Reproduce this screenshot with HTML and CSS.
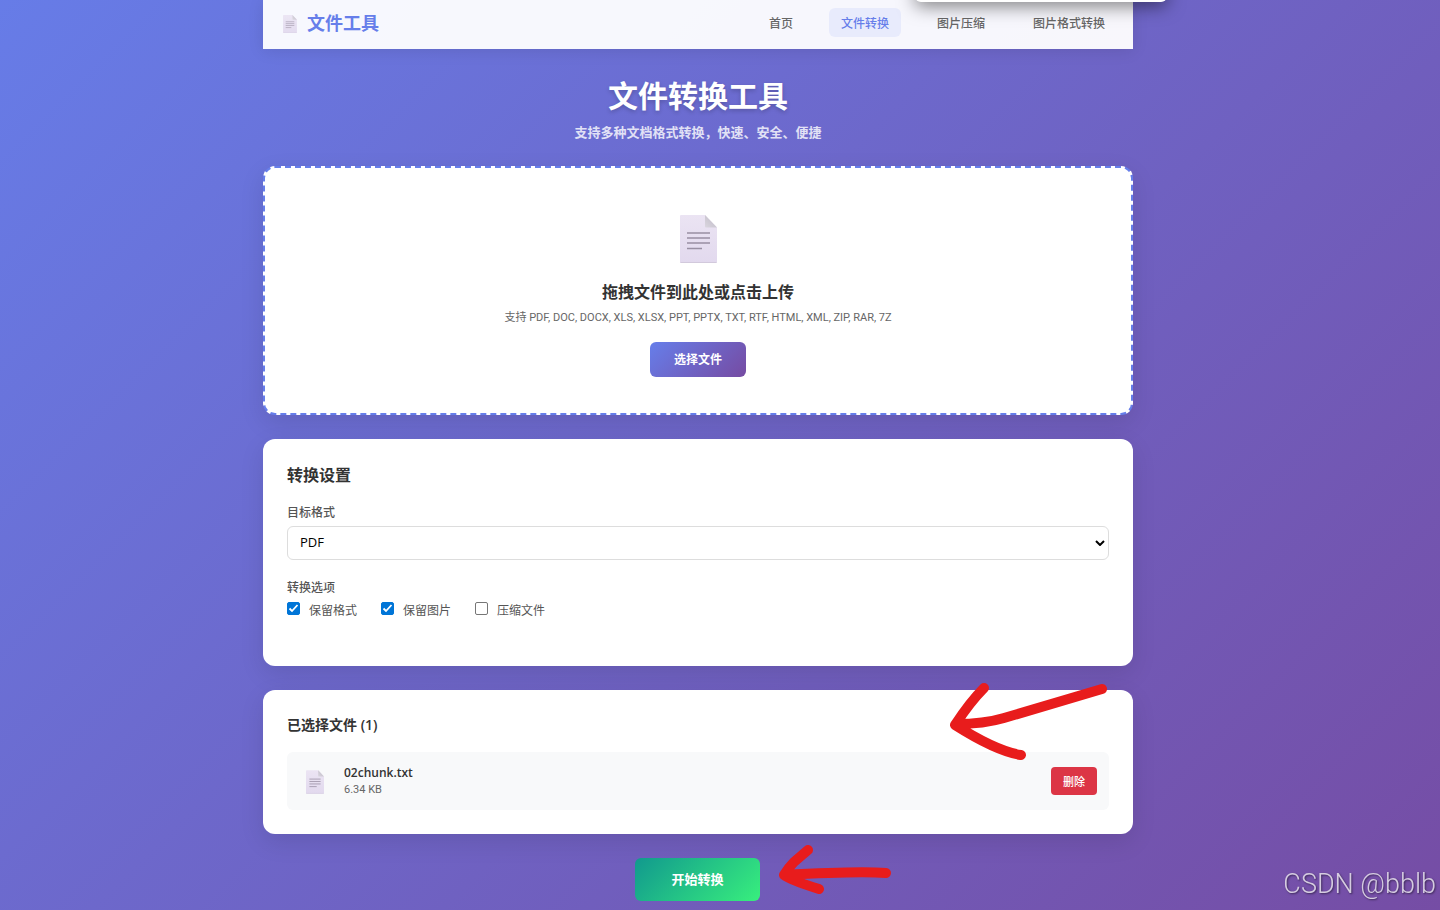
FILE: index.html
```html
<!DOCTYPE html>
<html lang="zh-CN">
<head>
<meta charset="utf-8">
<meta name="viewport" content="width=device-width, initial-scale=1">
<title>文件转换工具</title>
<link rel="stylesheet" href="styles.css">
</head>
<body>
<svg class="defs" aria-hidden="true">
  <defs>
    <linearGradient id="paper" x1="0" y1="0" x2="0" y2="1"><stop offset="0" stop-color="#ebe4f3"/><stop offset="1" stop-color="#e2d9ee"/></linearGradient>
    <linearGradient id="fold" x1="0" y1="1" x2="1" y2="0"><stop offset="0" stop-color="#dad6df"/><stop offset="1" stop-color="#bdb8c4"/></linearGradient>
    <symbol id="doc" viewBox="0 0 37 48">
      <path d="M1 0H25L37 12.500V47a1 1 0 0 1-1 1H1a1 1 0 0 1-1-1V1a1 1 0 0 1 1-1z" fill="url(#paper)"/>
      <path d="M.5 47.500H36.500" stroke="#d2c9dc" stroke-width="1"/>
      <path d="M25 0L37 12.500H26a1 1 0 0 1-1-1z" fill="url(#fold)"/>
      <path d="M7 18H30M7 23H30M7 28H30M7 33.500H22" stroke="#998fa3" stroke-width="1.600"/>
    </symbol>
  </defs>
</svg>
<div class="page">
  <header class="navbar">
    <a class="brand" href="#"><svg class="brand-icon" aria-hidden="true"><use href="#doc"/></svg>文件工具</a>
    <nav class="nav">
      <a class="nav-link" href="#">首页</a>
      <a class="nav-link active" href="#">文件转换</a>
      <a class="nav-link" href="#">图片压缩</a>
      <a class="nav-link" href="#">图片格式转换</a>
    </nav>
    <div class="popover"></div>
  </header>
  <main class="main">
    <div class="hero">
      <h1 class="title">文件转换工具</h1>
      <p class="subtitle">支持多种文档格式转换，快速、安全、便捷</p>
    </div>
    <section class="dropzone">
      <svg class="drop-icon" aria-hidden="true"><use href="#doc"/></svg>
      <h2 class="drop-title">拖拽文件到此处或点击上传</h2>
      <p class="formats">支持 PDF, DOC, DOCX, XLS, XLSX, PPT, PPTX, TXT, RTF, HTML, XML, ZIP, RAR, 7Z</p>
      <button class="choose" type="button">选择文件</button>
    </section>
    <section class="card settings">
      <h2 class="card-title">转换设置</h2>
      <label class="label" for="format">目标格式</label>
      <div class="select-wrap">
        <select class="select" id="format"><option>PDF</option></select>
        <svg class="chevron" viewBox="0 0 10 6" aria-hidden="true"><path d="M1 1L5 5L9 1" fill="none" stroke="#000" stroke-width="2"/></svg>
      </div>
      <fieldset class="options">
        <legend class="label">转换选项</legend>
        <div class="option-row">
          <label class="option"><input class="check" type="checkbox" checked>保留格式</label>
          <label class="option"><input class="check" type="checkbox" checked>保留图片</label>
          <label class="option"><input class="check" type="checkbox">压缩文件</label>
        </div>
      </fieldset>
    </section>
    <section class="card files">
      <h2 class="files-title">已选择文件 (1)</h2>
      <div class="file">
        <svg class="file-icon" aria-hidden="true"><use href="#doc"/></svg>
        <div class="file-info">
          <div class="file-name">02chunk.txt</div>
          <div class="file-size">6.34 KB</div>
        </div>
        <button class="delete" type="button">删除</button>
      </div>
      <svg class="arrow arrow-files" viewBox="0 0 160 80" aria-hidden="true">
        <path d="M154 7Q110 20 56 36Q36 42 8 42M36 6Q22 20 7 43M7 43Q48 69 73 73"/>
      </svg>
    </section>
    <div class="actions">
      <button class="start" type="button">开始转换</button>
      <svg class="arrow arrow-start" viewBox="0 0 114 54" aria-hidden="true">
        <path d="M108 29Q80 27 6 31M30 6L16 18Q10 24 6 31M6 31Q12 36 41 45"/>
      </svg>
    </div>
  </main>
</div>
<div class="watermark">CSDN @bblb</div>
</body>
</html>
```

FILE: styles.css
```css
* { box-sizing: border-box; }
body {
  margin: 0;
  min-height: 100vh;
  padding-right: 44px;
  overflow: hidden;
  font-family: "Open Sans", "Noto Sans CJK SC", sans-serif;
  font-size: 12px;
  color: #333;
  background: linear-gradient(135deg, #667eea -4%, #764ba2 104%);
}
h1, h2, p { margin: 0; }
button, select { font-family: inherit; }
button { border: 0; color: #fff; cursor: pointer; }
.defs { position: absolute; width: 0; height: 0; }
.page { max-width: 870px; margin: 0 auto; }

.navbar {
  position: relative;
  display: flex;
  align-items: center;
  justify-content: space-between;
  padding: 8px 16px 12px;
  background: rgba(255, 255, 255, .95);
  box-shadow: 0 2px 16px rgba(0, 0, 0, .1);
}
.brand {
  display: flex;
  align-items: center;
  gap: 10px;
  padding: 2px 0 0 4px;
  font-size: 18px;
  line-height: 27px;
  font-weight: 700;
  color: #667eea;
  text-decoration: none;
}
.brand-icon { width: 14px; height: 18px; opacity: .9; }
.nav { display: flex; gap: 24px; }
.nav-link {
  padding: 7px 12px 5px;
  border-radius: 6px;
  line-height: 17px;
  font-weight: 500;
  color: #666;
  text-decoration: none;
}
.nav-link.active { color: #667eea; background: #e8ebfc; }
.popover {
  position: absolute;
  top: -18px;
  right: -34px;
  width: 252px;
  height: 20px;
  border-radius: 6px;
  background: #fff;
  box-shadow: 0 4px 18px rgba(0, 0, 0, .5);
}

.hero { padding: 23px 0; text-align: center; color: #fff; }
.title {
  font-size: 30px;
  line-height: 48px;
  font-weight: 700;
  text-shadow: 0 2px 4px rgba(0, 0, 0, .2);
}
.subtitle { margin-top: 2px; font-size: 13px; line-height: 21px; font-weight: 600; opacity: .8; }

.dropzone {
  display: flex;
  flex-direction: column;
  align-items: center;
  padding: 47px 24px 36px;
  border: 2px dashed #667eea;
  border-radius: 12px;
  background: #fff;
  box-shadow: 0 8px 24px rgba(0, 0, 0, .1);
}
.drop-icon { width: 37px; height: 48px; }
.drop-title { margin-top: 16px; font-size: 16px; line-height: 26px; font-weight: 600; }
.formats {
  margin-top: 4px;
  font-family: Roboto, "Noto Sans CJK SC", sans-serif;
  font-size: 11px;
  line-height: 17px;
  color: #666;
}
.choose {
  margin-top: 16px;
  padding: 9px 24px;
  border-radius: 6px;
  font-size: 12px;
  line-height: 17px;
  font-weight: 700;
  background: linear-gradient(135deg, #667eea, #764ba2);
}

.card {
  position: relative;
  margin-top: 24px;
  padding: 24px;
  border-radius: 12px;
  background: #fff;
  box-shadow: 0 8px 24px rgba(0, 0, 0, .1);
}
.settings { padding-bottom: 46px; }
.card-title { margin-bottom: 16px; font-size: 16px; line-height: 24px; font-weight: 600; }
.label { display: block; padding: 0; line-height: 19px; font-weight: 500; color: #555; }
.select-wrap { position: relative; margin: 4px 0 18px; }
.select {
  display: block;
  width: 100%;
  height: 34px;
  padding: 0 12px 2px;
  appearance: none;
  border: 1px solid #ddd;
  border-radius: 6px;
  background: #fff;
  color: #000;
  font-size: 13px;
}
.chevron { position: absolute; right: 4px; top: 14px; width: 10px; height: 6px; }
.options { margin: 0; padding: 0; border: 0; }
.option-row { display: flex; gap: 24px; padding-top: 4px; }
.option {
  display: flex;
  align-items: flex-start;
  gap: 9px;
  line-height: 19px;
  color: #555;
}
.check {
  appearance: none;
  width: 13px;
  height: 13px;
  margin: 1px 0 0;
  border: 1px solid #767676;
  border-radius: 2px;
  background: #fff;
}
.check:checked {
  border-color: #0075d7;
  background: #0075d7 url("data:image/svg+xml,%3Csvg xmlns='http://www.w3.org/2000/svg' viewBox='0 0 11 11'%3E%3Cpath d='M1.500 5.500L4 8L9.500 2' fill='none' stroke='white' stroke-width='1.800'/%3E%3C/svg%3E") center / 11px 11px no-repeat;
}

.files-title { margin-bottom: 16px; font-size: 14px; line-height: 22px; font-weight: 600; }
.file {
  display: flex;
  align-items: center;
  padding: 12px 12px 12px 19px;
  border-radius: 6px;
  background: #f8f9fa;
}
.file-icon { width: 18px; height: 24px; margin-top: 2px; }
.file-info { flex: 1; margin-left: 20px; }
.file-name { font-size: 12px; line-height: 18px; font-weight: 600; }
.file-size { font-family: Roboto, sans-serif; font-size: 11px; line-height: 16px; color: #666; }
.delete {
  padding: 7px 12px 5px;
  border-radius: 4px;
  font-size: 11px;
  line-height: 16px;
  font-weight: 500;
  background: #dc3545;
}

.actions {
  position: relative;
  display: flex;
  justify-content: center;
  margin-top: 24px;
  padding-right: 1px;
}
.start {
  padding: 12px 36px;
  border-radius: 6px;
  font-size: 13px;
  line-height: 19px;
  font-weight: 700;
  background: linear-gradient(135deg, #11998e, #38ef7d);
}
.arrow {
  position: absolute;
  fill: none;
  stroke: #e81c1c;
  stroke-width: 10;
  stroke-linecap: round;
  stroke-linejoin: round;
}
.arrow-files { width: 160px; height: 80px; right: 25px; top: -8px; }
.arrow-start { width: 114px; height: 54px; left: calc(50% + 80px); top: -14px; }
.watermark {
  position: fixed;
  right: 4px;
  bottom: 10px;
  font-family: Roboto, sans-serif;
  font-size: 27px;
  line-height: 32px;
  font-weight: 300;
  color: #d5cce0;
  text-shadow: 1px 1px 2px rgba(0, 0, 0, .5);
}
```
